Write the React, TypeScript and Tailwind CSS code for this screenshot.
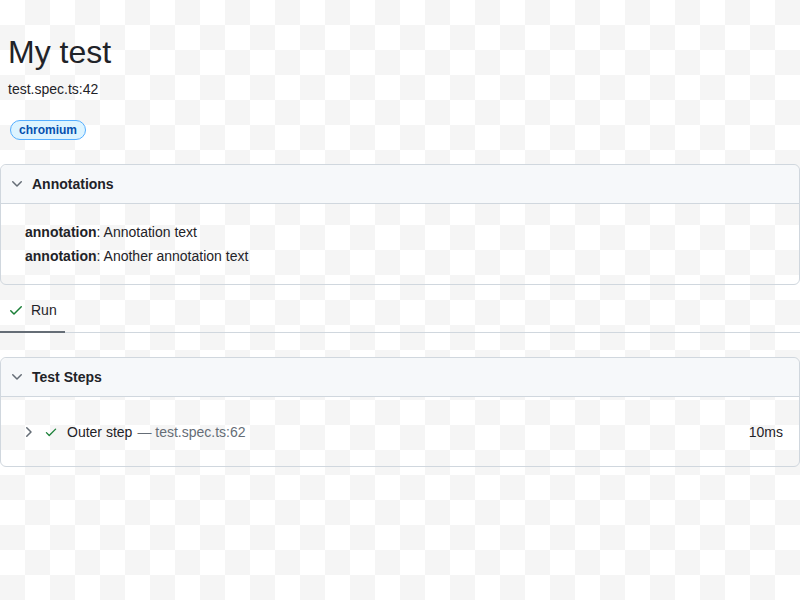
const ChevronDown = ({ className = "" }: { className?: string }) => (
  <svg width="16" height="16" viewBox="0 0 16 16" className={className} fill="currentColor">
    <path d="M12.78 5.22a.749.749 0 0 1 0 1.06l-4.25 4.25a.749.749 0 0 1-1.06 0L3.22 6.28a.749.749 0 1 1 1.06-1.06L8 8.939l3.72-3.719a.749.749 0 0 1 1.06 0Z" />
  </svg>
)

const ChevronRight = ({ className = "" }: { className?: string }) => (
  <svg width="16" height="16" viewBox="0 0 16 16" className={className} fill="currentColor">
    <path d="M6.22 3.22a.75.75 0 0 1 1.06 0l4.25 4.25a.75.75 0 0 1 0 1.06l-4.25 4.25a.751.751 0 0 1-1.042-.018.751.751 0 0 1-.018-1.042L9.94 8 6.22 4.28a.75.75 0 0 1 0-1.06Z" />
  </svg>
)

const Check = ({ size = 16, className = "" }: { size?: number; className?: string }) => (
  <svg width={size} height={size} viewBox="0 0 16 16" className={className} fill="currentColor">
    <path d="M13.78 4.22a.75.75 0 0 1 0 1.06l-7.25 7.25a.75.75 0 0 1-1.06 0L2.22 9.28a.751.751 0 0 1 .018-1.042.751.751 0 0 1 1.042-.018L6 10.94l6.72-6.72a.75.75 0 0 1 1.06 0Z" />
  </svg>
)

function Chip({ title, children, className = "" }: { title: string; children: React.ReactNode; className?: string }) {
  return (
    <div className={`border border-[#d0d7de] rounded-md ${className}`}>
      <div className="h-[39px] flex items-center gap-[7px] pl-2 bg-[#f6f8fa] border-b border-[#d0d7de] rounded-t-md">
        <ChevronDown className="text-[#656d76]" />
        <span className="font-bold">{title}</span>
      </div>
      {children}
    </div>
  )
}

export default function App() {
  return (
    <div className="min-h-screen w-full bg-[repeating-conic-gradient(#f5f5f5_0_25%,#ffffff_0_50%)] bg-[length:50px_50px] font-['Liberation_Sans',Arial,sans-serif] text-sm text-[#1f2328]">
      <div className="px-2 pt-8">
        <h1 className="text-[32px] leading-10 font-normal">My test</h1>
        <div className="mt-[7px] leading-5">test.spec.ts:42</div>
        <div className="mt-[21px] ml-[2px] flex">
          <span className="px-2 h-5 flex items-center rounded-full border border-[#54aeff] bg-[#ddf4ff] text-[#0550ae] text-xs font-bold">
            chromium
          </span>
        </div>
      </div>

      <Chip title="Annotations" className="mt-6">
        <div className="px-6 py-4 leading-6">
          <div>
            <span className="font-bold">annotation</span>: Annotation text
          </div>
          <div>
            <span className="font-bold">annotation</span>: Another annotation text
          </div>
        </div>
      </Chip>

      <div className="mt-[5px] flex border-b border-[#d0d7de]">
        <div className="px-2 pt-[10px] pb-[11px] -mb-px border-b-2 border-[#656d76] flex items-center gap-[7px] leading-5">
          <Check className="text-[#1a7f37]" />
          <span>Run</span>
        </div>
      </div>

      <Chip title="Test Steps" className="mt-6">
        <div className="pt-4 pb-[15px]">
          <div className="flex items-center leading-[38px] pl-[19px] pr-4">
            <ChevronRight className="text-[#656d76]" />
            <Check size={14} className="ml-2 text-[#1a7f37]" />
            <span className="ml-[9px]">Outer step</span>
            <span className="ml-[5px] text-[#656d76]">— test.spec.ts:62</span>
            <span className="ml-auto">10ms</span>
          </div>
        </div>
      </Chip>
    </div>
  )
}
